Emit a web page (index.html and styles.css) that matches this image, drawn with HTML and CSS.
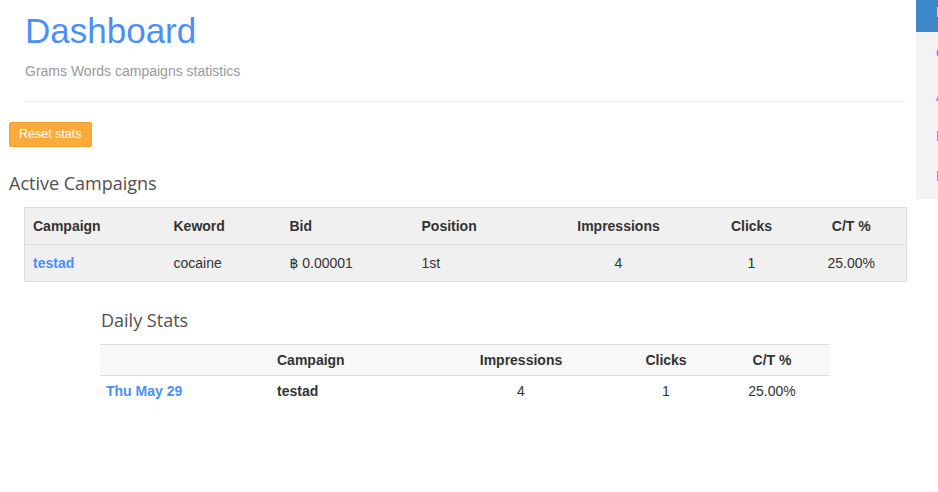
FILE: index.html
```html
<!DOCTYPE html>
<html>
<head>
<meta charset="utf-8">
<link rel="stylesheet" href="styles.css">
</head>
<body>
<div class="page">
  <main class="main">
    <header class="page-header">
      <h1 class="title">Dashboard</h1>
      <p class="subtitle">Grams Words campaigns statistics</p>
    </header>
    <button class="btn-reset">Reset stats</button>
    <h3 class="section-title">Active Campaigns</h3>
    <table class="campaigns">
      <colgroup>
        <col class="c1"><col class="c2"><col class="c3"><col class="c4"><col class="c5"><col class="c6"><col class="c7">
      </colgroup>
      <thead>
        <tr>
          <th>Campaign</th><th>Keword</th><th>Bid</th><th>Position</th>
          <th class="center">Impressions</th><th class="center">Clicks</th><th class="center">C/T %</th>
        </tr>
      </thead>
      <tbody>
        <tr>
          <td><a class="link" href="#">testad</a></td><td>cocaine</td><td>฿ 0.00001</td><td>1st</td>
          <td class="center">4</td><td class="center">1</td><td class="center">25.00%</td>
        </tr>
      </tbody>
    </table>
    <h3 class="section-title daily-title">Daily Stats</h3>
    <table class="daily">
      <colgroup>
        <col class="d1"><col class="d2"><col class="d3"><col class="d4"><col class="d5">
      </colgroup>
      <thead>
        <tr>
          <th></th><th>Campaign</th><th class="center">Impressions</th><th class="center">Clicks</th><th class="center">C/T %</th>
        </tr>
      </thead>
      <tbody>
        <tr>
          <td class="date"><a class="link" href="#">Thu May 29</a></td><td class="bold">testad</td>
          <td class="center">4</td><td class="center">1</td><td class="center">25.00%</td>
        </tr>
      </tbody>
    </table>
  </main>
  <aside class="sidebar">
    <div class="side-head">Menu</div>
    <ul class="side-nav">
      <li><a href="#">Campaigns</a></li>
      <li><a href="#">Ads</a></li>
      <li><a href="#">Keywords</a></li>
      <li><a href="#">Logout</a></li>
    </ul>
  </aside>
</div>
</body>
</html>
```
FILE: styles.css
```css
html, body {
  margin: 0;
  padding: 0;
  overflow: hidden;
  background: #fff;
}
body {
  font-family: "Liberation Sans", Arial, "DejaVu Sans", sans-serif;
  font-size: 14px;
  line-height: 20px;
  color: #333;
}
.page {
  display: flex;
  align-items: flex-start;
}
.main {
  width: 907px;
  flex-shrink: 0;
  padding-left: 9px;
  box-sizing: border-box;
}
.page-header {
  margin-left: 15px;
  width: 882px;
  border-bottom: 1px solid #eee;
  padding-left: 1px;
  box-sizing: border-box;
  padding-bottom: 20px;
}
.title {
  margin: 11px 0 0;
  font-size: 35px;
  line-height: 40px;
  font-weight: normal;
  color: #4d8ff6;
}
.subtitle {
  margin: 10px 0 0;
  color: #999;
  font-size: 14px;
  line-height: 20px;
}
.btn-reset {
  display: block;
  margin-top: 20px;
  height: 25px;
  padding: 0 9px;
  background: #fbaa3c;
  border: 1px solid #eea035;
  border-radius: 2px;
  color: #fff;
  font-family: "Liberation Sans", Arial, sans-serif;
  font-size: 12.5px;
  line-height: 23px;
  cursor: pointer;
}
.section-title {
  margin: 26px 0 0;
  font-family: "Open Sans", "Liberation Sans", sans-serif;
  font-size: 18px;
  line-height: 20px;
  font-weight: normal;
  color: #505050;
}
.daily-title {
  margin: 28px 0 0 92px;
}
table {
  border-collapse: collapse;
  table-layout: fixed;
}
th {
  font-weight: bold;
  text-align: left;
}
.center {
  text-align: center;
}
.bold {
  font-weight: bold;
}
.link {
  color: #4a8ff5;
  font-weight: bold;
  text-decoration: none;
}
.campaigns {
  margin: 14px 0 0 15px;
  width: 882px;
  background: #f0f0f0;
  border: 1px solid #ddd;
}
.campaigns th, .campaigns td {
  padding: 8px 8px;
  border-top: 1px solid #ddd;
  line-height: 20px;
}
.c1 { width: 141px; }
.c2 { width: 116px; }
.c3 { width: 132px; }
.c4 { width: 117px; }
.c5 { width: 176px; }
.c6 { width: 90px; }
.c7 { width: 110px; }
.daily {
  margin: 14px 0 0 91px;
  width: 730px;
}
.daily th, .daily td {
  padding: 5px 8px;
  line-height: 20px;
  border-top: 1px solid #ddd;
}
.daily thead tr {
  background: #f8f8f8;
}
.daily .date {
  padding-left: 6px;
}
.d1 { width: 169px; }
.d2 { width: 155px; }
.d3 { width: 194px; }
.d4 { width: 96px; }
.d5 { width: 116px; }
.sidebar {
  margin-left: 9px;
  width: 200px;
  flex-shrink: 0;
  background: #f3f3f3;
  padding-bottom: 3px;
}
.side-head {
  height: 32px;
  background: #3e86c8;
  color: #d8f4ff;
  padding-left: 20px;
  line-height: 24px;
  font-size: 14px;
}
.side-nav {
  list-style: none;
  margin: 0;
  padding: 0;
}
.side-nav li {
  height: 40px;
  line-height: 40px;
  padding-left: 20px;
}
.side-nav li:first-child {
  margin-top: 1px;
}
.side-nav li:nth-child(2) {
  margin-top: 3px;
}
.side-nav a {
  color: #7a6be8;
  text-decoration: none;
}
```
